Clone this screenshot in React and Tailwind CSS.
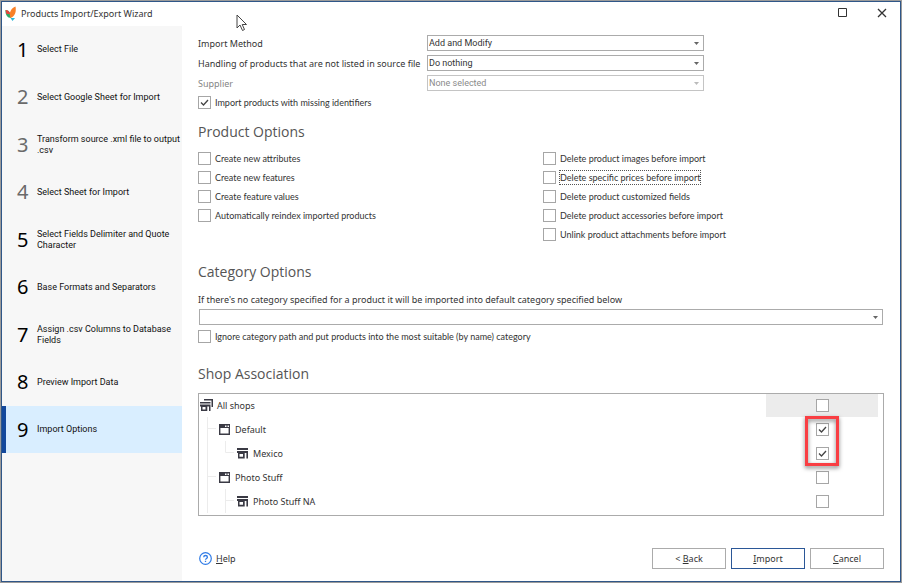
import clsx from 'clsx'

const steps = [
  { label: 'Select File' },
  { label: 'Select Google Sheet for Import', muted: true },
  { label: 'Transform source .xml file to output .csv', muted: true },
  { label: 'Select Sheet for Import', muted: true },
  { label: 'Select Fields Delimiter and Quote Character' },
  { label: 'Base Formats and Separators' },
  { label: 'Assign .csv Columns to Database Fields' },
  { label: 'Preview Import Data' },
  { label: 'Import Options', active: true },
]

const createOptions = [
  'Create new attributes',
  'Create new features',
  'Create feature values',
  'Automatically reindex imported products',
]

const deleteOptions = [
  'Delete product images before import',
  'Delete specific prices before import',
  'Delete product customized fields',
  'Delete product accessories before import',
  'Unlink product attachments before import',
]

const shops = [
  { name: 'All shops', icon: 'all', guides: [] },
  { name: 'Default', icon: 'group', guides: ['tee'], checked: true },
  { name: 'Mexico', icon: 'shop', guides: ['line', 'end'], checked: true },
  { name: 'Photo Stuff', icon: 'group', guides: ['tee'] },
  { name: 'Photo Stuff NA', icon: 'shop', guides: ['line', 'tee'] },
]

function Logo() {
  return (
    <svg className="w-3 h-4" viewBox="0 0 12 16" aria-hidden="true">
      <path d="M0.500 5C4 5 6 8 6 13 2.500 13 0 9.500 0.500 5z" fill="#2fa866" />
      <path d="M0.500 5C3 5 4.500 6.500 5.200 9L1.500 9z" fill="#e8453c" />
      <path d="M10.500 1.500c1 5.500-0.500 9.500-5 11.500C3.500 8 6 3 10.500 1.500z" fill="#f98028" />
      <path d="M5.500 13l4.500 0L7.500 16z" fill="#29b6d8" />
    </svg>
  )
}

function Cursor() {
  return (
    <svg className="absolute left-[234px] top-3 w-3 h-[18px]" viewBox="0 0 12 18" aria-hidden="true">
      <path d="M1 1v13l3-3 2.500 5.500 2-1L6.200 10.500h4.300z" fill="#fff" stroke="#444" />
    </svg>
  )
}

function ShopIcon({ type }) {
  if (type === 'group') {
    return (
      <svg className="w-[13px] h-[13px] shrink-0" viewBox="0 0 13 13" aria-hidden="true">
        <path d="M1.700 1.700h9.600v9.600H1.700z" fill="#fff" stroke="#3a3a44" strokeWidth="1.400" />
        <path d="M1 1h11v4H1z" fill="#3a3a44" />
        <path d="M7 2.500h1.500V4H7zM9.500 2.500H11V4H9.500z" fill="#fff" />
      </svg>
    )
  }
  if (type === 'all') {
    return (
      <svg className="w-[13px] h-[13px] shrink-0" viewBox="0 0 13 13" fill="#3a3a44" aria-hidden="true">
        <path d="M4 0h9v8h-1.500V1.500H4zM0 3h10.500v1.600H0zM0 5.600h10.500V12H9V7.500H7.300V12H1V7.500H0zM2.500 8v2.500h3V8z" fillRule="evenodd" />
      </svg>
    )
  }
  return (
    <svg className="w-[13px] h-[13px] shrink-0" viewBox="0 0 13 13" fill="#3a3a44" aria-hidden="true">
      <path d="M1 1h11v2H1zM1 4h11v7.500h-1.600V6H8.700v5.500H2V6H1zM3.500 7v2.800h3.500V7z" fillRule="evenodd" />
    </svg>
  )
}

function Guide({ type }) {
  const paths = {
    line: 'M7.500 0V24',
    tee: 'M7.500 0V24M7.500 11.500H16',
    end: 'M7.500 0V11.500H16',
  }
  return (
    <svg className="w-[18px] h-6 shrink-0" viewBox="0 0 18 24" aria-hidden="true">
      <path d={paths[type]} fill="none" stroke="#ececec" />
    </svg>
  )
}

function Tick({ className, ...props }) {
  return (
    <span className="grid shrink-0">
      <input
        type="checkbox"
        className={clsx('peer col-start-1 row-start-1 appearance-none w-[13px] h-[13px] border border-[#a6a6a6] bg-white outline-none', className)}
        {...props}
      />
      <svg
        className="hidden peer-checked:block pointer-events-none col-start-1 row-start-1 w-[13px] h-[13px]"
        viewBox="0 0 13 13"
        aria-hidden="true"
      >
        <path d="M3 6.500l2.500 2.500L10 4" fill="none" stroke="#444" strokeWidth="1.300" />
      </svg>
    </span>
  )
}

function CheckOption({ label, focused, ...props }) {
  return (
    <label className="flex items-center gap-[3px] h-[19px] whitespace-nowrap font-['Lato',sans-serif]">
      <Tick {...props} />
      <span className={clsx('leading-[13px] border border-dotted', focused ? 'border-[#555]' : 'border-transparent')}>
        {label}
      </span>
    </label>
  )
}

function Combo({ id, value, disabled, className, ...props }) {
  return (
    <span className={clsx('grid', className)}>
      <select
        id={id}
        disabled={disabled}
        className="col-start-1 row-start-1 w-full h-4 appearance-none border border-[#ababab] bg-white px-px font-['Roboto',sans-serif] leading-[14px] outline-none disabled:border-[#c4c4c4] disabled:text-[#8a8a8a] disabled:opacity-100"
        {...props}
      >
        <option>{value}</option>
      </select>
      <svg
        className={clsx('col-start-1 row-start-1 justify-self-end self-center mr-[5px] w-[5px] h-[3px] pointer-events-none', disabled ? 'text-[#bbb]' : 'text-[#666]')}
        viewBox="0 0 5 3"
        fill="currentColor"
        aria-hidden="true"
      >
        <path d="M0 0h5L2.500 3z" />
      </svg>
    </span>
  )
}

function Field({ id, label, value, disabled }) {
  return (
    <div className="flex items-center h-5">
      <label
        htmlFor={id}
        className={clsx('w-[229px] shrink-0 whitespace-nowrap', disabled ? 'text-[#858585]' : 'text-[#333]')}
      >
        {label}
      </label>
      <Combo id={id} value={value} disabled={disabled} className="flex-1 max-w-[277px]" />
    </div>
  )
}

function WizardButton({ primary, children }) {
  return (
    <button
      type="button"
      className={clsx('w-[74px] h-[21px] border bg-white', primary ? 'border-[#2b5797]' : 'border-[#ababab]')}
    >
      {children}
    </button>
  )
}

export default function App() {
  return (
    <div className="min-h-screen flex border border-[#9b9b9b] bg-white font-['Noto_Sans',sans-serif] text-[9px] leading-[11px] text-[#333]">
      <div className="relative flex-1 flex flex-col border border-[#2f5688]">
        <header className="flex items-center h-6 pl-[3px] pr-3 pb-[2px]">
          <Logo />
          <h1 className="ml-1">Products Import/Export Wizard</h1>
          <div className="ml-auto flex gap-7">
            <button type="button" aria-label="Maximize">
              <svg className="w-3 h-3" viewBox="0 0 12 12" aria-hidden="true">
                <path d="M2.500 1.500h8v8h-8z" fill="none" stroke="#333" />
              </svg>
            </button>
            <button type="button" aria-label="Close" className="p-px">
              <svg className="w-[10px] h-[10px]" viewBox="0 0 10 10" aria-hidden="true">
                <path d="M1 1l8 8M9 1L1 9" fill="none" stroke="#333" strokeWidth="1.300" />
              </svg>
            </button>
          </div>
        </header>
        <Cursor />

        <div className="flex-1 flex">
          <nav className="w-[180px] shrink-0 bg-[#f7f7f7]">
            <ol>
              {steps.map((step, i) => (
                <li
                  key={step.label}
                  className={clsx(
                    'flex items-center pl-[11px] border-l-4 odd:h-[47px] even:h-12',
                    step.active ? 'border-[#14489b] bg-[#d9eeff]' : 'border-transparent',
                  )}
                >
                  <span className={clsx('w-5 text-[20px] leading-6', step.muted ? 'text-[#6a6a6a]' : 'text-black')}>
                    {i + 1}
                  </span>
                  <span className="flex-1 text-[#111] font-['Roboto',sans-serif]">{step.label}</span>
                </li>
              ))}
            </ol>
          </nav>

          <main className="flex-1 flex flex-col pl-4 pr-4 pt-[7px] pb-3">
            <Field id="method" label="Import Method" value="Add and Modify" />
            <Field id="handling" label="Handling of products that are not listed in source file" value="Do nothing" />
            <Field id="supplier" label="Supplier" value="None selected" disabled />
            <CheckOption label="Import products with missing identifiers" defaultChecked />

            <h2 className="mt-[10px] text-[14px] leading-5 text-[#555] font-['Open_Sans',sans-serif]">Product Options</h2>
            <div className="mt-[7px] grid grid-cols-2 gap-x-1">
              <div>
                {createOptions.map(label => <CheckOption key={label} label={label} />)}
              </div>
              <div>
                {deleteOptions.map((label, i) => <CheckOption key={label} label={label} focused={i === 1} />)}
              </div>
            </div>

            <h2 className="mt-[18px] text-[14px] leading-5 text-[#555] font-['Open_Sans',sans-serif]">Category Options</h2>
            <label htmlFor="category" className="mt-[10px] leading-4">
              If there's no category specified for a product it will be imported into default category specified below
            </label>
            <Combo id="category" value="" className="mt-px mx-px" />
            <div className="mt-[2px]">
              <CheckOption label="Ignore category path and put products into the most suitable (by name) category" />
            </div>

            <h2 className="mt-[18px] text-[14px] leading-5 text-[#555] font-['Open_Sans',sans-serif]">Shop Association</h2>
            <div className="relative mt-[9px] border border-[#ababab]">
              <ul className="h-[121px] overflow-hidden">
                {shops.map((shop, i) => (
                  <li key={shop.name} className="flex h-6 first:h-[23px] pl-px pr-[5px]">
                    <label htmlFor={`shop-${i}`} className="flex-1 flex items-center">
                      {shop.guides.map((type, n) => <Guide key={n} type={type} />)}
                      <ShopIcon type={shop.icon} />
                      <span className="ml-1">{shop.name}</span>
                    </label>
                    <span className={clsx('w-28 flex items-center justify-center', i === 0 && 'bg-[#ececec]')}>
                      <Tick id={`shop-${i}`} defaultChecked={shop.checked} />
                    </span>
                  </li>
                ))}
              </ul>
              <div className="absolute right-11 top-[22px] w-[34px] h-[50px] border-3 border-[#f93e43] drop-shadow-[0_2px_2px_rgba(0,0,0,0.5)] pointer-events-none" />
            </div>

            <footer className="mt-auto flex items-center gap-[5px]">
              <a href="#help" className="mr-auto flex items-center gap-1 pl-px">
                <svg className="w-[13px] h-[13px]" viewBox="0 0 13 13" fill="none" stroke="#2f7be6" aria-hidden="true">
                  <circle cx="6.500" cy="6.500" r="5.800" strokeWidth="1.200" />
                  <path d="M4.700 5.200c0-2.300 3.700-2.300 3.700 0 0 1.300-1.900 1.200-1.900 2.600M6.500 8.800v1.200" strokeWidth="1.300" />
                </svg>
                <span><u>H</u>elp</span>
              </a>
              <WizardButton>&lt; <u>B</u>ack</WizardButton>
              <WizardButton primary><u>I</u>mport</WizardButton>
              <WizardButton><u>C</u>ancel</WizardButton>
            </footer>
          </main>
        </div>
      </div>
    </div>
  )
}
